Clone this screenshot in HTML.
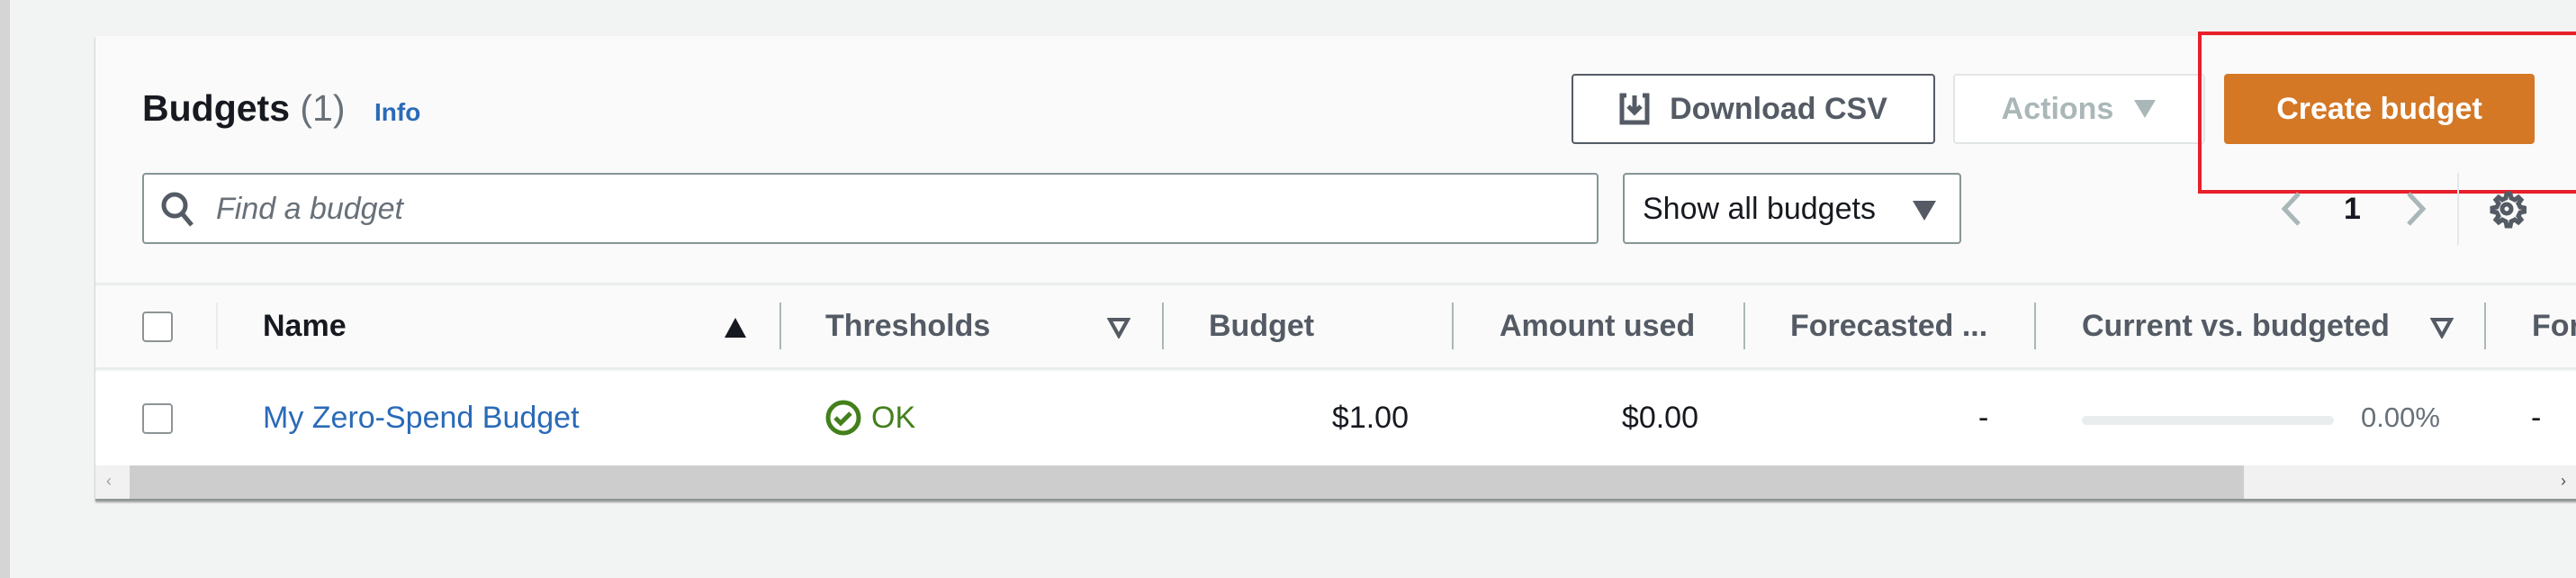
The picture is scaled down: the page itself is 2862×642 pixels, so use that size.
<!DOCTYPE html>
<html><head><meta charset="utf-8"><style>
*{margin:0;padding:0;box-sizing:border-box}
body{width:2862px;height:642px;overflow:hidden;background:#f2f3f3;position:relative;font-family:"Liberation Sans",Arial,sans-serif}
.a{position:absolute;white-space:nowrap}
.strip{left:0;top:0;width:11px;height:642px;background:#d5d5d5}
.panel{left:106px;top:40px;width:2760px;height:516px;background:#fafafa;box-shadow:0 2px 2px rgba(0,0,0,.35)}
.btn{border-radius:4px;height:78px;top:82px;font-weight:bold;font-size:34px;display:flex;align-items:center;justify-content:center}
.hdr{top:342px;font-size:34px;font-weight:bold;color:#545b64;line-height:40px}
.sep{width:2px;background:#aab7b8;top:336px;height:52px}
.cell{top:444px;font-size:34px;line-height:40px;color:#16191f}
.cb{width:34px;height:34px;border:2px solid #8d9496;border-radius:4px;background:#fff}
</style></head><body>
<div class="a strip"></div>
<div class="a panel"></div>
<div class="a" style="left:106px;top:314px;width:2760px;height:97px;border-top:3px solid #eaeded;border-bottom:3px solid #eaeded"></div>
<div class="a" style="left:106px;top:413px;width:2760px;height:104px;background:#fff"></div>

<div class="a" style="left:158px;top:96px;font-size:41px;font-weight:bold;color:#16191f;line-height:48px">Budgets <span style="font-weight:normal;color:#687078">(1)</span></div>
<div class="a" style="left:416px;top:108px;font-size:28px;font-weight:bold;color:#2a6ab8;line-height:34px">Info</div>

<div class="a btn" style="left:1746px;width:404px;border:2px solid #545b64;background:#fff;color:#545b64">
<svg width="34" height="36" viewBox="0 0 34 36" style="margin-right:22px"><path d="M8 3H3v30h28V3h-5" fill="none" stroke="#545b64" stroke-width="5"/><path d="M17 3v19M10 15l7 7 7-7" fill="none" stroke="#545b64" stroke-width="5"/></svg>Download CSV</div>
<div class="a btn" style="left:2170px;width:280px;border:2px solid #e2e5e6;background:#fff;color:#aab7b8">Actions<svg width="26" height="22" viewBox="0 0 26 22" style="margin-left:22px"><path d="M1 1h24L13 21z" fill="#aab7b8"/></svg></div>
<div class="a btn" style="left:2471px;width:345px;background:#d47826;color:#fff">Create budget</div>
<div class="a" style="left:2442px;top:35px;width:430px;height:180px;border:4px solid #e8202a"></div>

<div class="a" style="left:158px;top:192px;width:1618px;height:79px;border:2px solid #879596;border-radius:4px;background:#fff"></div>
<svg class="a" style="left:178px;top:212px" width="40" height="42" viewBox="0 0 40 42"><circle cx="16" cy="16" r="12" fill="none" stroke="#545b64" stroke-width="5"/><path d="M25 26l10 12" stroke="#545b64" stroke-width="5"/></svg>
<div class="a" style="left:240px;top:212px;font-size:34px;font-style:italic;color:#687078;line-height:40px">Find a budget</div>

<div class="a" style="left:1803px;top:192px;width:376px;height:79px;border:2px solid #879596;border-radius:4px;background:#fff"></div>
<div class="a" style="left:1825px;top:212px;font-size:34px;color:#16191f;line-height:40px">Show all budgets</div>
<svg class="a" style="left:2124px;top:222px" width="28" height="24" viewBox="0 0 28 24"><path d="M1 1h26L14 23z" fill="#545b64"/></svg>

<svg class="a" style="left:2530px;top:212px" width="30" height="40" viewBox="0 0 30 40"><path d="M24 3L8 20l16 17" fill="none" stroke="#aab7b8" stroke-width="5"/></svg>
<div class="a" style="left:2604px;top:212px;font-size:34px;font-weight:bold;color:#16191f;line-height:40px">1</div>
<svg class="a" style="left:2670px;top:212px" width="30" height="40" viewBox="0 0 30 40"><path d="M6 3l16 17L6 37" fill="none" stroke="#aab7b8" stroke-width="5"/></svg>
<div class="a" style="left:2730px;top:192px;width:2px;height:80px;background:#e5e8e9"></div>
<svg class="a" style="left:2763px;top:210px" width="44" height="44" viewBox="0 0 44 44"><g fill="none" stroke="#545b64" stroke-width="5"><path d="M22 5l4 0 1 5 4 2 4-3 3 3-3 4 2 4 5 1v4l-5 1-2 4 3 4-3 3-4-3-4 2-1 5h-4l-1-5-4-2-4 3-3-3 3-4-2-4-5-1v-4l5-1 2-4-3-4 3-3 4 3 4-2 1-5z"/><circle cx="22" cy="22" r="5"/></g></svg>

<div class="a cb" style="left:158px;top:346px"></div>
<div class="a" style="left:240px;top:336px;width:2px;height:52px;background:#eaeded"></div>
<div class="a hdr" style="left:292px;color:#16191f">Name</div>
<svg class="a" style="left:804px;top:352px" width="26" height="24" viewBox="0 0 26 24"><path d="M13 1L25 23H1z" fill="#16191f"/></svg>
<div class="a sep" style="left:866px"></div>
<div class="a hdr" style="left:917px">Thresholds</div>
<svg class="a" style="left:1230px;top:352px" width="26" height="24" viewBox="0 0 26 24"><path d="M3 3h20L13 21z" fill="none" stroke="#545b64" stroke-width="4"/></svg>
<div class="a sep" style="left:1291px"></div>
<div class="a hdr" style="left:1343px">Budget</div>
<div class="a sep" style="left:1613px"></div>
<div class="a hdr" style="left:1666px">Amount used</div>
<div class="a sep" style="left:1937px"></div>
<div class="a hdr" style="left:1989px">Forecasted ...</div>
<div class="a sep" style="left:2260px"></div>
<div class="a hdr" style="left:2313px">Current vs. budgeted</div>
<svg class="a" style="left:2700px;top:352px" width="26" height="24" viewBox="0 0 26 24"><path d="M3 3h20L13 21z" fill="none" stroke="#545b64" stroke-width="4"/></svg>
<div class="a sep" style="left:2760px"></div>
<div class="a hdr" style="left:2813px">For</div>

<div class="a cb" style="left:158px;top:448px"></div>
<div class="a cell" style="left:292px;color:#2a6ab8">My Zero-Spend Budget</div>
<svg class="a" style="left:916px;top:443px" width="42" height="42" viewBox="0 0 42 42"><circle cx="21" cy="21" r="17" fill="none" stroke="#43801c" stroke-width="5"/><path d="M12 21l6 6 11-11" fill="none" stroke="#43801c" stroke-width="5"/></svg>
<div class="a cell" style="left:968px;color:#43801c">OK</div>
<div class="a cell" style="left:1465px;width:100px;text-align:right">$1.00</div>
<div class="a cell" style="left:1787px;width:100px;text-align:right">$0.00</div>
<div class="a cell" style="left:2198px">-</div>
<div class="a" style="left:2313px;top:462px;width:280px;height:10px;border-radius:5px;background:#eaeded"></div>
<div class="a cell" style="left:2623px;font-size:31px;color:#687078">0.00%</div>
<div class="a cell" style="left:2812px">-</div>

<div class="a" style="left:106px;top:517px;width:2760px;height:37px;background:#f1f1f1"></div>
<div class="a" style="left:144px;top:517px;width:2349px;height:37px;background:#cdcdcd"></div>
<div class="a" style="left:118px;top:524px;font-size:18px;color:#a0a0a0">‹</div>
<div class="a" style="left:2845px;top:524px;font-size:18px;color:#505050">›</div>
<div class="a" style="left:106px;top:554px;width:2760px;height:2px;background:#8d9496"></div>
</body></html>
